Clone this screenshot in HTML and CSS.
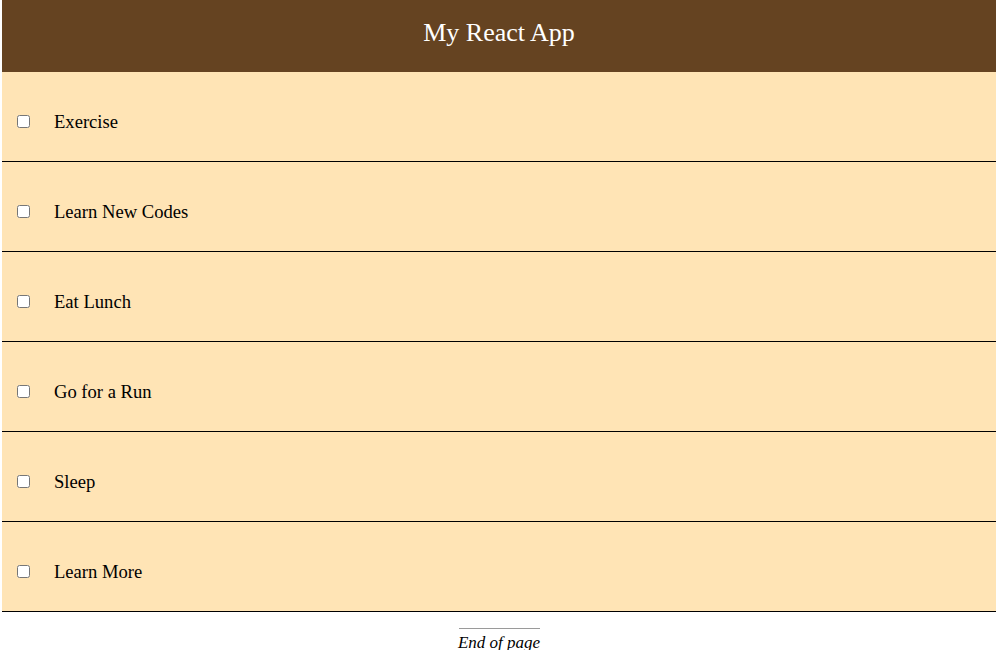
FILE: index.html
```html
<!DOCTYPE html>
<html>
<head>
<meta charset="utf-8">
<link rel="stylesheet" href="styles.css">
</head>
<body>
<div class="app">
  <header class="header"><h1 class="title">My React App</h1></header>
  <ul class="list">
    <li class="item"><input type="checkbox" class="check"><span class="label">Exercise</span></li>
    <li class="item"><input type="checkbox" class="check"><span class="label">Learn New Codes</span></li>
    <li class="item"><input type="checkbox" class="check"><span class="label">Eat Lunch</span></li>
    <li class="item"><input type="checkbox" class="check"><span class="label">Go for a Run</span></li>
    <li class="item"><input type="checkbox" class="check"><span class="label">Sleep</span></li>
    <li class="item"><input type="checkbox" class="check"><span class="label">Learn More</span></li>
  </ul>
  <footer class="footer">
    <div class="rule"></div>
    <p class="end">End of page</p>
  </footer>
</div>
</body>
</html>
```
FILE: styles.css
```css
html, body {
  margin: 0;
  padding: 0;
  background: #ffffff;
  font-family: "Liberation Serif", "Times New Roman", serif;
  color: #000;
}
.app {
  margin-left: 2px;
  width: 994px;
}
.header {
  height: 72px;
  background: #654321;
  display: flex;
  align-items: center;
  justify-content: center;
}
.title {
  margin: 0 0 6px 0;
  font-size: 26px;
  font-weight: normal;
  color: #ffffff;
  line-height: 1;
}
.list {
  list-style: none;
  margin: 0;
  padding: 0;
}
.item {
  height: 89px;
  box-sizing: content-box;
  border-bottom: 1px solid #000;
  background: #ffe4b5;
  display: flex;
  align-items: center;
  padding-left: 15px;
}
.check {
  width: 13px;
  height: 13px;
  margin: 10px 0 0 0;
}
.label {
  margin-left: 24px;
  margin-top: 10px;
  font-size: 18.6px;
}
.footer {
  display: flex;
  flex-direction: column;
  align-items: center;
  padding-top: 16px;
}
.rule {
  width: 81px;
  height: 1px;
  background: #9a9a9a;
}
.end {
  margin: 4px 0 0 0;
  font-style: italic;
  font-size: 17px;
}
```
